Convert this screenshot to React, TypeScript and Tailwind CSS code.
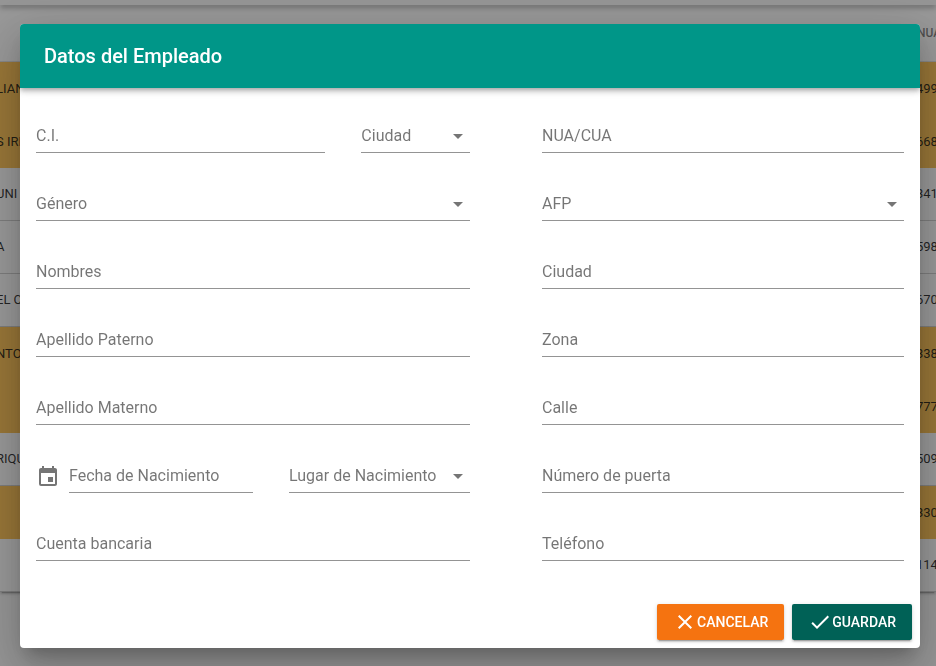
import { useId, type ReactNode } from "react";
import { MdArrowDropDown, MdCheck, MdClose, MdEvent } from "react-icons/md";

type Row = { name: string; nua: string; marked?: boolean };

const rows: Row[] = [
  { name: "LIAN", nua: "499", marked: true },
  { name: "S IRE", nua: "668", marked: true },
  { name: "UNI", nua: "341" },
  { name: "A", nua: "598" },
  { name: "EL C", nua: "670" },
  { name: "NTO", nua: "338", marked: true },
  { name: "", nua: "777", marked: true },
  { name: "RIQU", nua: "509" },
  { name: "", nua: "330", marked: true },
  { name: "", nua: "114" },
];

const barShadow =
  "shadow-[0_2px_4px_-1px_rgba(0,0,0,0.2),0_4px_5px_0_rgba(0,0,0,0.14),0_1px_10px_0_rgba(0,0,0,0.12)]";

function EmployeeTable() {
  return (
    <div className="min-h-screen overflow-hidden bg-[#fafafa]">
      <div className={`relative z-10 h-[5px] bg-[#fafafa] ${barShadow}`} />
      <table className="w-full table-fixed border-separate border-spacing-0 bg-white text-[13px] text-black/87 shadow-[0_3px_1px_-2px_rgba(0,0,0,0.2),0_2px_2px_0_rgba(0,0,0,0.14),0_1px_5px_0_rgba(0,0,0,0.12)]">
        <thead>
          <tr className="h-[57px] text-left text-xs text-black/54">
            <th className="border-b border-black/12" />
            <th className="w-5 border-b border-black/12 p-0 pl-px font-medium">NUA</th>
          </tr>
        </thead>
        <tbody>
          {rows.map((row) => (
            <tr key={row.nua} className={row.marked ? "h-[53px] bg-[#ffc04d]" : "h-[53px]"}>
              <td className={row.marked ? "overflow-hidden p-0 whitespace-nowrap" : "overflow-hidden border-b border-black/20 p-0 whitespace-nowrap"}>
                <div className="-ml-1">{row.name}</div>
              </td>
              <td className={row.marked ? "w-5 p-0" : "w-5 border-b border-black/20 p-0"}>{row.nua}</td>
            </tr>
          ))}
        </tbody>
      </table>
    </div>
  );
}

function Field({ label, className = "", children }: { label: string; className?: string; children: (id: string) => ReactNode }) {
  const id = useId();
  return (
    <div className={`grid h-[33px] items-center border-b border-[#949494] text-base text-black/54 ${className}`}>
      <label htmlFor={id} className="pointer-events-none z-10 col-start-1 row-start-1 truncate leading-6">
        {label}
      </label>
      {children(id)}
    </div>
  );
}

function TextField({ label, className }: { label: string; className?: string }) {
  return (
    <Field label={label} className={className}>
      {(id) => <input id={id} type="text" className="col-start-1 row-start-1 h-8 w-full min-w-0 bg-transparent outline-none" />}
    </Field>
  );
}

function SelectField({ label, className }: { label: string; className?: string }) {
  return (
    <Field label={label} className={className}>
      {(id) => (
        <>
          <select id={id} defaultValue="" className="col-start-1 row-start-1 h-8 w-full min-w-0 appearance-none bg-transparent outline-none">
            <option value="" />
          </select>
          <MdArrowDropDown className="pointer-events-none col-start-1 row-start-1 size-6 justify-self-end" />
        </>
      )}
    </Field>
  );
}

const buttonShadow =
  "shadow-[0_3px_1px_-2px_rgba(0,0,0,0.2),0_2px_2px_0_rgba(0,0,0,0.14),0_1px_5px_0_rgba(0,0,0,0.12)]";

function EmployeeDialog() {
  return (
    <div
      role="dialog"
      aria-modal="true"
      aria-labelledby="dialog-title"
      className="w-full max-w-[900px] overflow-hidden rounded bg-white shadow-[0_11px_15px_-7px_rgba(0,0,0,0.2),0_24px_38px_3px_rgba(0,0,0,0.14),0_9px_46px_8px_rgba(0,0,0,0.12)]"
    >
      <header className={`flex h-16 items-center bg-[#009688] px-6 text-white ${barShadow}`}>
        <h1 id="dialog-title" className="text-xl font-medium">
          Datos del Empleado
        </h1>
      </header>
      <form onSubmit={(event) => event.preventDefault()}>
        <div className="grid grid-cols-2 px-4 pt-8 pb-[43px]">
          <div className="flex flex-col gap-[35px]">
            <div className="grid grid-cols-3">
              <TextField label="C.I." className="col-span-2" />
              <div className="pl-9">
                <SelectField label="Ciudad" />
              </div>
            </div>
            <SelectField label="Género" />
            <TextField label="Nombres" />
            <TextField label="Apellido Paterno" />
            <TextField label="Apellido Materno" />
            <div className="grid grid-cols-2">
              <div className="flex items-center gap-[9px]">
                <MdEvent className="size-6 shrink-0 text-black/54" />
                <TextField label="Fecha de Nacimiento" className="min-w-0 flex-1" />
              </div>
              <div className="pl-9">
                <SelectField label="Lugar de Nacimiento" />
              </div>
            </div>
            <TextField label="Cuenta bancaria" />
          </div>
          <div className="flex flex-col gap-[35px] pl-[72px]">
            <TextField label="NUA/CUA" />
            <SelectField label="AFP" />
            <TextField label="Ciudad" />
            <TextField label="Zona" />
            <TextField label="Calle" />
            <TextField label="Número de puerta" />
            <TextField label="Teléfono" />
          </div>
        </div>
        <div className="flex justify-end gap-2 px-2 pb-2 text-sm font-medium text-white">
          <button type="button" className={`flex h-9 items-center rounded-xs bg-[#f57310] px-4 ${buttonShadow}`}>
            <MdClose className="size-6" />
            CANCELAR
          </button>
          <button type="submit" className={`flex h-9 items-center rounded-xs bg-[#006156] px-4 ${buttonShadow}`}>
            <MdCheck className="size-6" />
            GUARDAR
          </button>
        </div>
      </form>
    </div>
  );
}

export default function App() {
  return (
    <div className="font-[Roboto,sans-serif]">
      <EmployeeTable />
      <div className="fixed inset-0 z-20 flex items-start justify-center overflow-hidden bg-[#212121]/46 pt-6 pr-4 pl-5">
        <EmployeeDialog />
      </div>
    </div>
  );
}
